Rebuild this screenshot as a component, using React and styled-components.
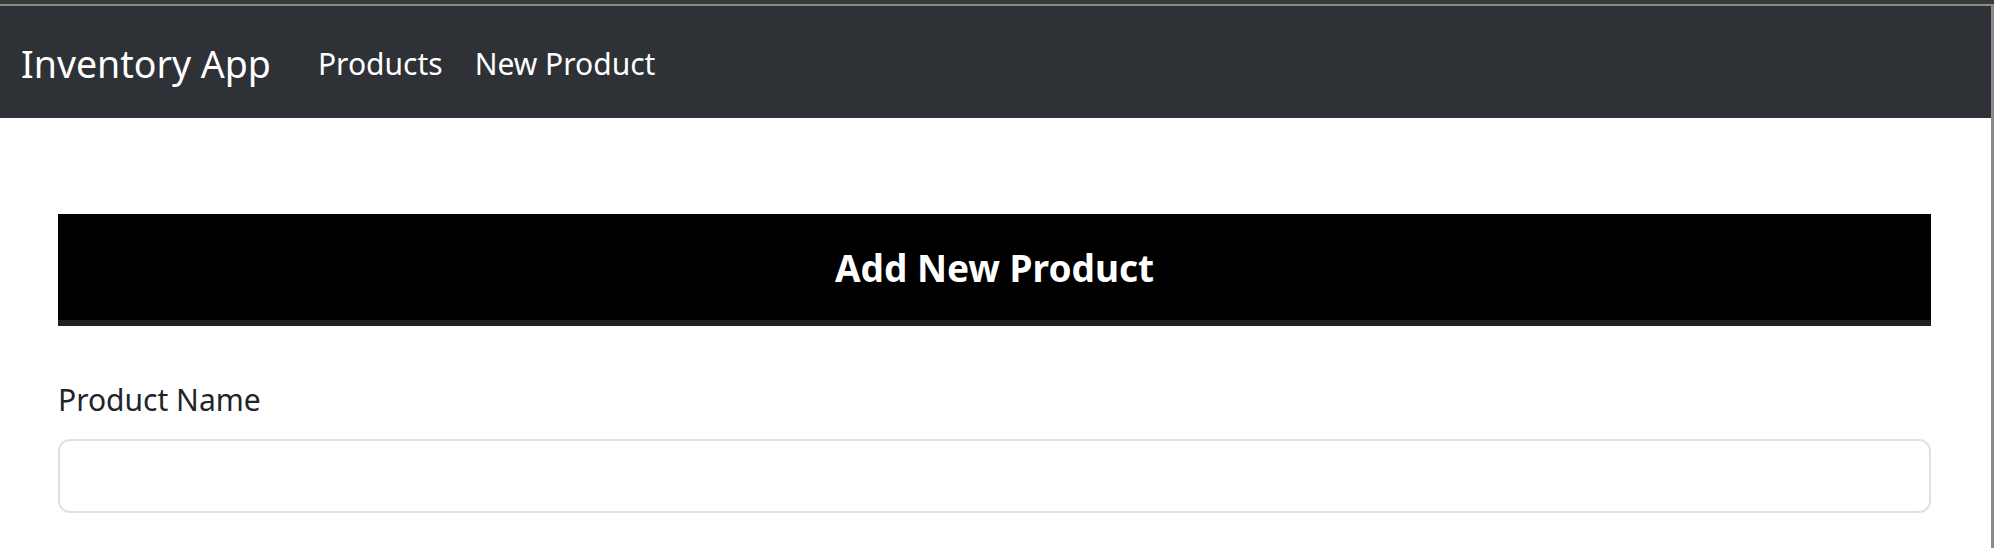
import React from 'react'
import styled, { createGlobalStyle } from 'styled-components'

const GlobalStyle = createGlobalStyle`
  html, body {
    margin: 0;
    padding: 0;
    background: #fff;
  }
  body {
    font-family: "Noto Sans", "Open Sans", sans-serif;
    color: #212529;
  }
  * { box-sizing: border-box; }
`

const Window = styled.div`
  min-height: 548px;
  border-top: 4px solid #3a3a3a;
`

const Frame = styled.div`
  min-height: 544px;
  border-top: 2px solid #8a8a8a;
  border-right: 3px solid #8a8a8a;
`

const Navbar = styled.nav`
  display: flex;
  align-items: center;
  height: 112px;
  padding: 3px 21px 0;
  background: #2e3136;
`

const Brand = styled.a`
  font-size: 37.5px;
  line-height: 60px;
  color: #fff;
  text-decoration: none;
  margin-right: 31px;
`

const NavLinks = styled.div`
  display: flex;
  align-items: center;
`

const NavLink = styled.a`
  font-size: 30px;
  line-height: 48px;
  padding: 0 16px;
  color: #fff;
  text-decoration: none;
`

const Main = styled.main`
  padding: 96px 60px 40px 58px;
`

const CardHeader = styled.div`
  display: flex;
  align-items: center;
  justify-content: center;
  height: 112px;
  background: #000;
  border-bottom: 6px solid #212121;
  h3 {
    margin: 0;
    color: #fff;
    font-size: 37px;
    font-weight: 700;
  }
`

const Field = styled.div`
  margin-top: 50px;
`

const Label = styled.label`
  display: block;
  font-size: 30px;
  line-height: 48px;
  margin-bottom: 15px;
`

const Input = styled.input`
  display: block;
  width: 100%;
  height: 74px;
  border: 2px solid #dee2e6;
  border-radius: 12px;
  padding: 0 24px;
  font-size: 30px;
  font-family: inherit;
  outline: none;
`

export default function App() {
  return (
    <>
      <GlobalStyle />
      <Window>
        <Frame>
          <Navbar>
            <Brand href="#">Inventory App</Brand>
            <NavLinks>
              <NavLink href="#">Products</NavLink>
              <NavLink href="#">New Product</NavLink>
            </NavLinks>
          </Navbar>
          <Main>
            <CardHeader>
              <h3>Add New Product</h3>
            </CardHeader>
            <Field>
              <Label htmlFor="name">Product Name</Label>
              <Input id="name" type="text" />
            </Field>
          </Main>
        </Frame>
      </Window>
    </>
  )
}
